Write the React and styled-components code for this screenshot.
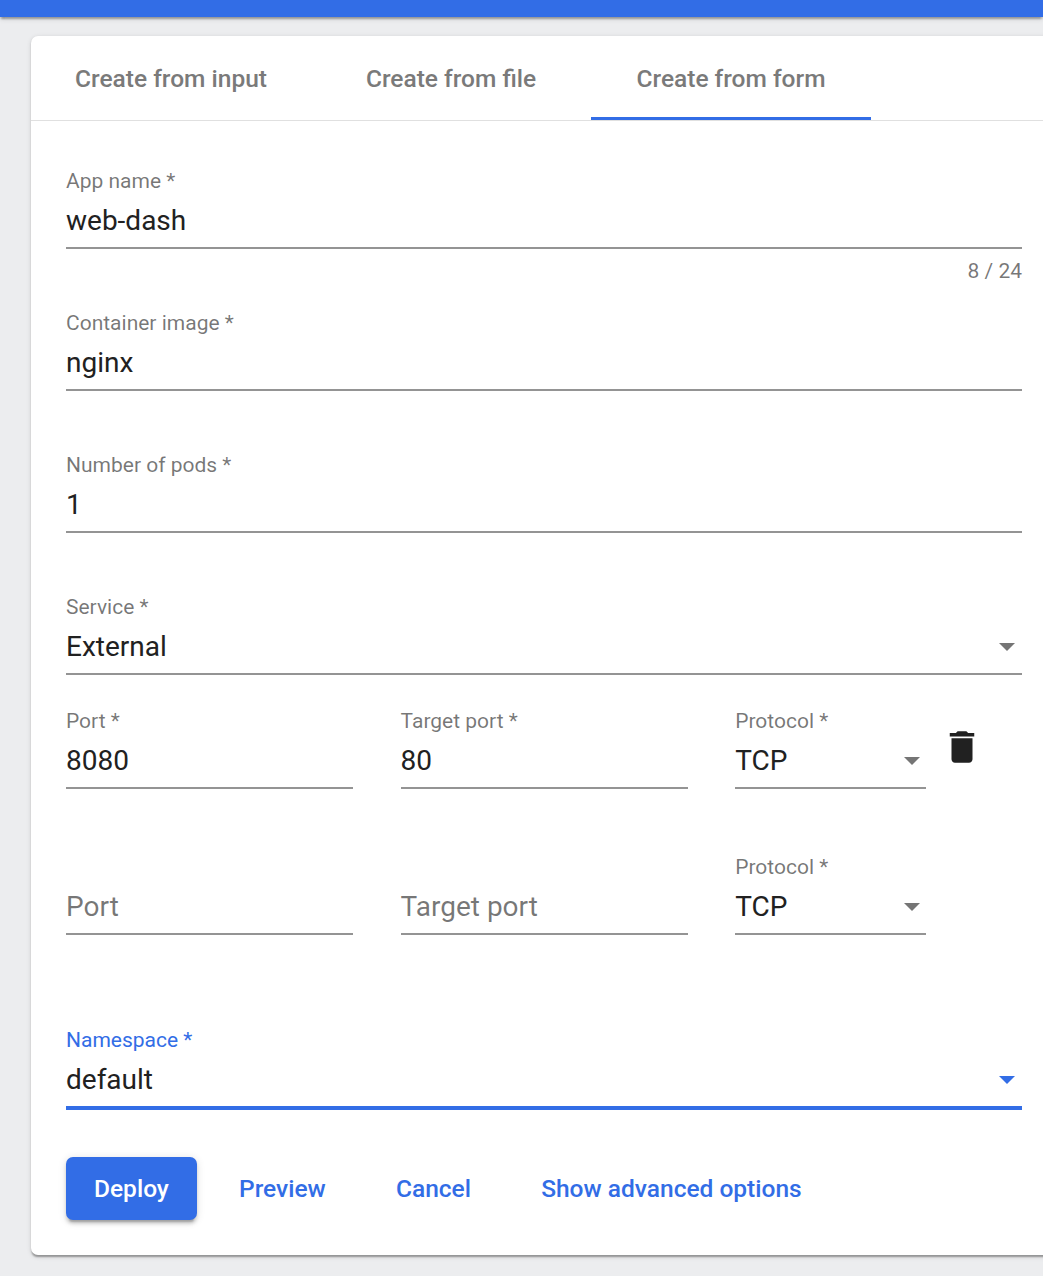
import React from "react";
import styled, { createGlobalStyle } from "styled-components";

const blue = "#326de6";
const muted = "rgba(0, 0, 0, 0.54)";
const raised = "0 3.5px 1.75px -1.75px rgba(0, 0, 0, 0.2), 0 1.75px 1.75px rgba(0, 0, 0, 0.14), 0 1.75px 5.25px rgba(0, 0, 0, 0.12)";

const Global = createGlobalStyle`
  *, *::before, *::after { box-sizing: border-box; }
  html, body { margin: 0; background: #ecedef; overflow: hidden; }
  body { font-family: Roboto, "Liberation Sans", sans-serif; color: #212121; }
`;
const Page = styled.div`
  height: 1276px;
  overflow: hidden;
`;
const TopBar = styled.header`
  height: 17px;
  background: ${blue};
  box-shadow: ${raised};
`;
const Card = styled.main`
  width: 1080px;
  height: 1219px;
  margin: 19px 0 0 31px;
  background: #fff;
  border-radius: 7px;
  box-shadow: ${raised};
`;
const Tabs = styled.nav`
  display: flex;
  height: 85px;
  border-bottom: 1px solid #e0e0e0;
`;
const Tab = styled.button`
  width: 280px;
  height: 84px;
  padding: 4px 0 0;
  border: 0;
  border-bottom: 3px solid ${(p) => (p.$active ? blue : "transparent")};
  background: none;
  color: #7a7a7a;
  font: 500 24.5px/28px Roboto, sans-serif;
`;
const Form = styled.form`
  width: 956px;
  margin: 47px 0 0 35px;
`;
const FieldBox = styled.div`
  width: 100%;
  height: ${(p) => p.$height || 142}px;
`;
const Label = styled.div`
  height: 28px;
  color: ${(p) => (p.$active ? blue : muted)};
  font-size: 21px;
  line-height: 26px;
  white-space: nowrap;
`;
const Value = styled.div`
  display: flex;
  align-items: center;
  justify-content: space-between;
  height: ${(p) => (p.$active ? 55 : 53)}px;
  padding: 0 6.6px 1px 0;
  border-bottom: ${(p) => (p.$active ? 4 : 2)}px solid ${(p) => (p.$active ? blue : "#949494")};
  color: ${(p) => (p.$empty ? muted : "#212121")};
  font-size: 28px;
  line-height: 32px;
`;
const Arrow = styled.svg`
  width: 16px;
  height: 8px;
  fill: ${(p) => (p.$active ? blue : "#757575")};
`;
const Counter = styled.div`
  padding-top: 9px;
  color: ${muted};
  font-size: 21px;
  line-height: 26px;
  text-align: right;
`;
const PortRow = styled.div`
  display: grid;
  grid-template-columns: 287px 287px 191.2px 32px;
  column-gap: 47.6px;
  height: ${(p) => p.$height}px;
`;
const DeleteButton = styled.button`
  width: 42px;
  height: 42px;
  margin: 18px 0 0 -33.3px;
  padding: 0;
  border: 0;
  background: none;
`;
const TrashIcon = styled.svg`
  display: block;
  width: 42px;
  height: 42px;
  fill: #212121;
`;
const Actions = styled.div`
  display: flex;
  align-items: center;
  gap: 14.2px;
  height: 63px;
`;
const Action = styled.button`
  height: 63px;
  padding: 0 28px;
  border: 0;
  border-radius: 7px;
  background: ${(p) => (p.$primary ? blue : "transparent")};
  color: ${(p) => (p.$primary ? "#fff" : blue)};
  box-shadow: ${(p) => (p.$primary ? "0 5.25px 1.75px -3.5px rgba(0, 0, 0, 0.2), 0 3.5px 3.5px rgba(0, 0, 0, 0.14), 0 1.75px 8.75px rgba(0, 0, 0, 0.12)" : "none")};
  font: 500 24.5px/28px Roboto, sans-serif;
  white-space: nowrap;
`;

function Field({ label, value, placeholder, select, active, height, counter }) {
  return (
    <FieldBox $height={height}>
      <Label $active={active}>{label}</Label>
      <Value $active={active} $empty={!value}>
        <span>{value || placeholder}</span>
        {select && <Arrow $active={active} viewBox="0 0 16 8"><path d="M0 0h16L8 8z" /></Arrow>}
      </Value>
      {counter && <Counter>{counter}</Counter>}
    </FieldBox>
  );
}

export default function App() {
  return (
    <>
      <Global />
      <Page>
        <TopBar />
        <Card>
          <Tabs>
            <Tab>Create from input</Tab>
            <Tab>Create from file</Tab>
            <Tab $active>Create from form</Tab>
          </Tabs>
          <Form>
            <Field label="App name *" value="web-dash" counter="8 / 24" />
            <Field label="Container image *" value="nginx" />
            <Field label="Number of pods *" value="1" />
            <Field label="Service *" value="External" select height={114} />
            <PortRow $height={146}>
              <Field label="Port *" value="8080" />
              <Field label="Target port *" value="80" />
              <Field label="Protocol *" value="TCP" select />
              <DeleteButton type="button" aria-label="Delete">
                <TrashIcon viewBox="0 0 24 24"><path d="M6 19c0 1.1.9 2 2 2h8c1.1 0 2-.9 2-2V7H6v12zM19 4h-3.500l-1-1h-5l-1 1H5v2h14V4z" /></TrashIcon>
              </DeleteButton>
            </PortRow>
            <PortRow $height={173}>
              <Field placeholder="Port" />
              <Field placeholder="Target port" />
              <Field label="Protocol *" value="TCP" select />
            </PortRow>
            <Field label="Namespace *" value="default" select active height={130} />
            <Actions>
              <Action type="button" $primary>Deploy</Action>
              <Action type="button">Preview</Action>
              <Action type="button">Cancel</Action>
              <Action type="button">Show advanced options</Action>
            </Actions>
          </Form>
        </Card>
      </Page>
    </>
  );
}
